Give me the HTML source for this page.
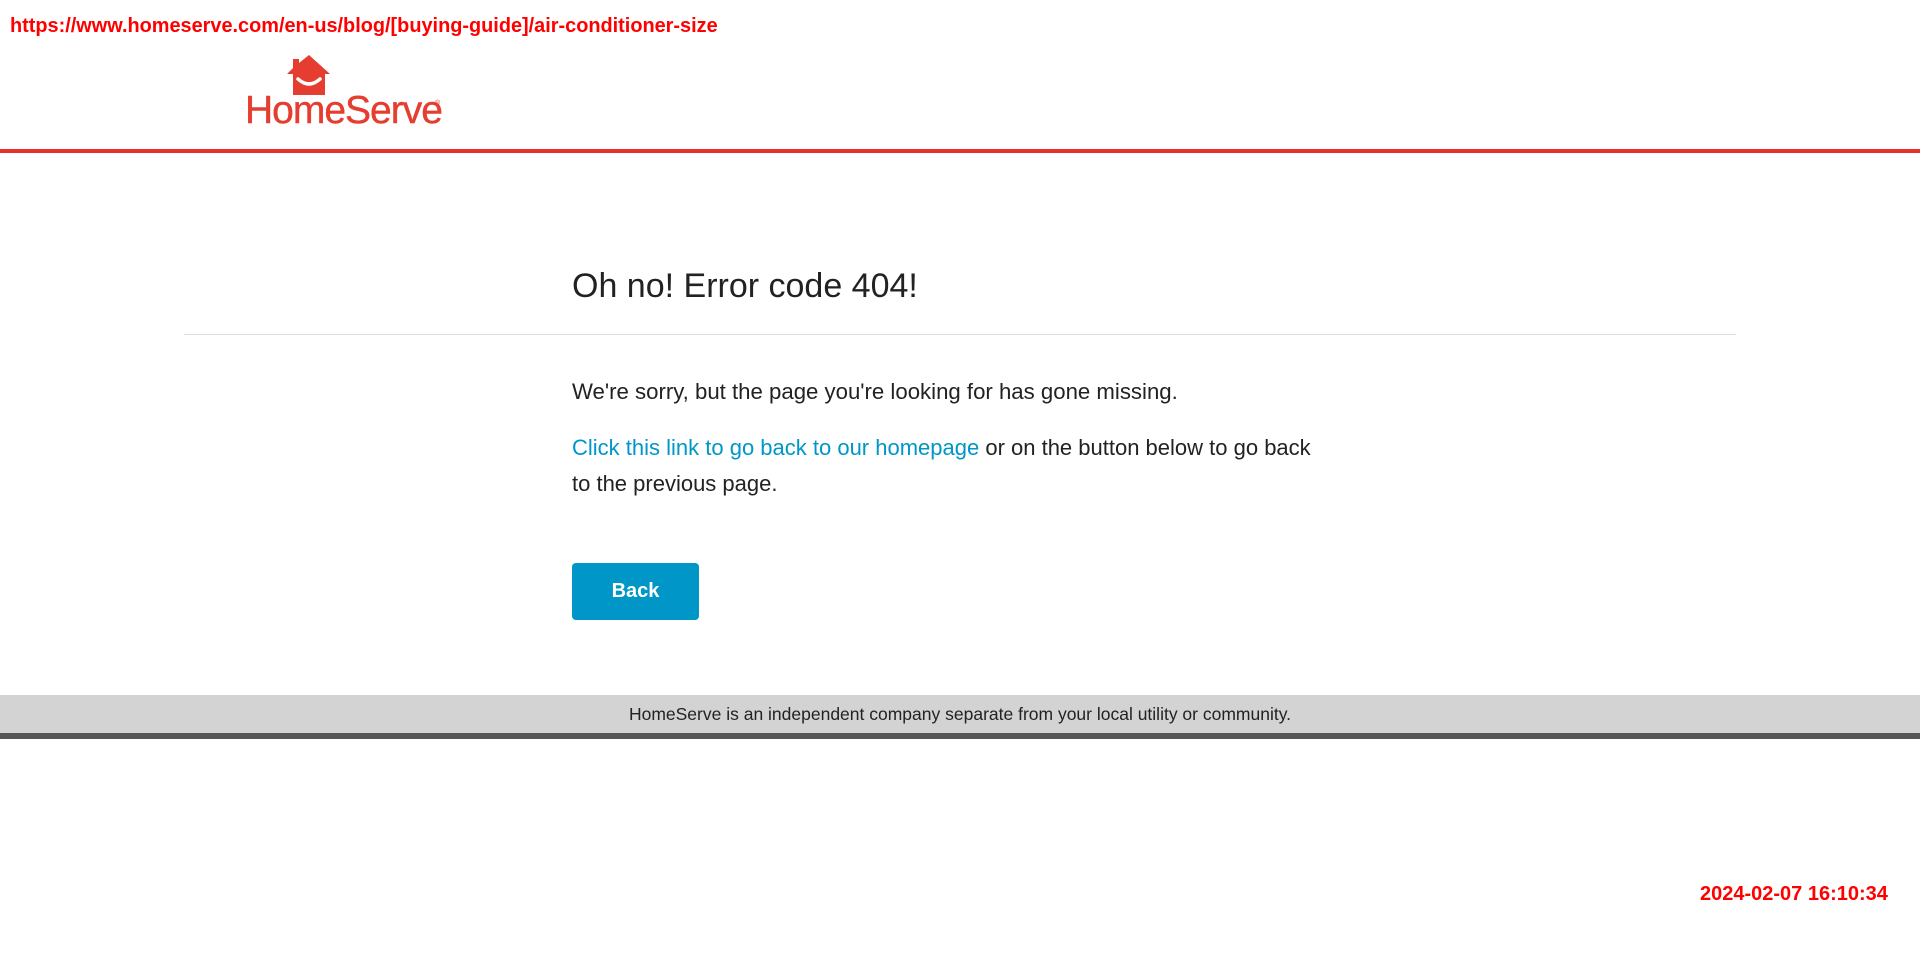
<!DOCTYPE html>
<html><head><meta charset="utf-8">
<style>
html,body{margin:0;padding:0;width:1920px;height:963px;background:#fff;overflow:hidden;font-family:"Liberation Sans",sans-serif;}
.url{position:absolute;left:10px;top:15px;font-weight:bold;font-size:19.9px;color:#f00;}
.logo{position:absolute;left:245px;top:55px;}
.redline{position:absolute;left:0;top:149px;width:1920px;height:4px;background:#e8302d;}
h1{position:absolute;left:572px;top:267px;margin:0;font-weight:normal;font-size:34px;color:#222;}
.hr{position:absolute;left:184px;top:334px;width:1552px;height:1px;background:#ddd;}
.p1{position:absolute;left:572px;top:379px;font-size:22.2px;color:#222;}
.p2{position:absolute;left:572px;top:430px;width:740px;font-size:22px;line-height:36px;color:#222;}
.p2 a{color:#0096c8;text-decoration:none;}
.btn{position:absolute;left:572px;top:563px;width:127px;height:57px;background:#0096c8;border-radius:4px;color:#fff;font-weight:bold;font-size:20px;text-align:center;line-height:57px;}
.foot{position:absolute;left:0;top:695px;width:1920px;height:38px;background:#d3d3d3;text-align:center;font-size:17.5px;line-height:38px;color:#222;}
.dark{position:absolute;left:0;top:733px;width:1920px;height:6px;background:#555;}
.ts{position:absolute;left:1700px;top:883px;font-weight:bold;font-size:20px;color:#f00;}
</style></head><body>
<div class="url">https://www.homeserve.com/en-us/blog/[buying-guide]/air-conditioner-size</div>
<div class="logo">
<svg width="200" height="72" viewBox="0 0 200 72">
<path d="M64 0 L85 19 L80 19 L80 40 L48 40 L48 19 L42 19 L48 13 L48 4 L54 4 L54 8 Z" fill="#e53d2f"/>
<path d="M53 24 Q64 34 75 24" stroke="#fff" stroke-width="3.5" fill="none" stroke-linecap="round"/>
<text x="0" y="68" font-family="Liberation Sans,sans-serif" font-size="39" fill="#e53d2f" stroke="#e53d2f" stroke-width="0.4" letter-spacing="-1">HomeServe</text>
<text x="190" y="50" font-size="7" fill="#e53d2f">®</text>
</svg>
</div>
<div class="redline"></div>
<h1>Oh no! Error code 404!</h1>
<div class="hr"></div>
<div class="p1">We're sorry, but the page you're looking for has gone missing.</div>
<div class="p2"><a>Click this link to go back to our homepage</a> or on the button below to go back to the previous page.</div>
<div class="btn">Back</div>
<div class="foot">HomeServe is an independent company separate from your local utility or community.</div>
<div class="dark"></div>
<div class="ts">2024-02-07 16:10:34</div>
</body></html>
